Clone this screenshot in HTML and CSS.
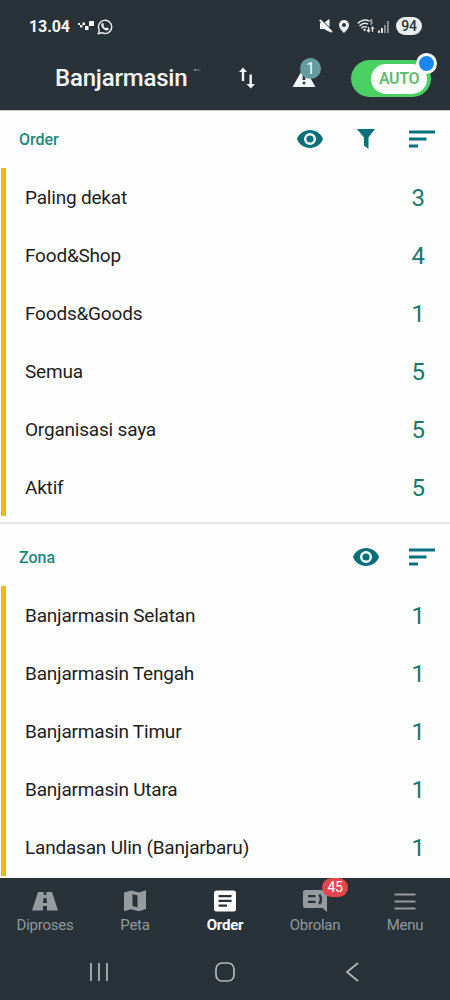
FILE: index.html
```html
<!DOCTYPE html>
<html lang="id">
<head>
<meta charset="utf-8">
<title>Order</title>
<link rel="stylesheet" href="styles.css">
</head>
<body>
<svg class="defs" width="0" height="0">
  <symbol id="eye" viewBox="0 0 26 18"><path fill-rule="evenodd" d="M13 0C7.1 0 2 3.700 0 9c2 5.300 7.100 9 13 9s11-3.700 13-9C24 3.700 18.900 0 13 0zm0 15a6 6 0 1 1 0-12 6 6 0 0 1 0 12zm0-2.400a3.600 3.600 0 1 0 0-7.200 3.600 3.600 0 0 0 0 7.200z"/></symbol>
  <symbol id="sort" viewBox="0 0 26 18"><path d="M0 .5h26v3H0zM0 7.500h17.500v3H0zM0 14.500h9v3H0z"/></symbol>
</svg>
<div class="screen">
  <header class="top">
    <div class="status">
      <span class="clock">13.04</span>
      <svg class="pixels" width="16" height="10" viewBox="0 0 16 10"><path d="M0 2h2v2H0zM2 4h2.500v2.500H2zM4.500 1.500H7V4H4.500zM7 5h3.500v4H7zM11 0h5v5h-5z"/></svg>
      <svg class="wa" width="16" height="16" viewBox="0 0 16 16"><path d="M1.300 14.700l1-3.700A6.600 6.600 0 1 1 5 13.700z" fill="none" stroke="#e8eef0" stroke-width="1.400" stroke-linejoin="round"/><path d="M5 4.300c.5-.5 1-.4 1.300.1l.6 1.300c.1.400-.4.800-.6 1.100.5 1.200 1.300 2 2.600 2.500.4-.3.700-.9 1.100-.8l1.500.8c.5.300.2 1.400-.5 1.800-1.400.8-3.200 0-4.500-1.200S4 7 4.300 5.400c.1-.4.400-.8.700-1.100z"/></svg>
      <span class="grow"></span>
      <svg class="mute" width="14" height="14" viewBox="0 0 14 14"><path d="M1 4h3.500L10.500 0v13L5 10H1z"/><path d="M0 1.300l13 13" stroke="#2a3239" stroke-width="1.200" transform="translate(1.200 -1.500)"/><path d="M.8 1l12 12" stroke="#f4f7f8" stroke-width="2"/></svg>
      <svg class="pin" width="10" height="13" viewBox="0 0 10 13"><path fill-rule="evenodd" d="M5 0a5 5 0 0 0-5 5c0 3 3 6 5 8 2-2 5-5 5-8a5 5 0 0 0-5-5zm0 7a2 2 0 1 1 0-4 2 2 0 0 1 0 4z"/></svg>
      <svg class="wifi" width="18" height="14" viewBox="0 0 18 14"><g fill="none" stroke="#e4eaec" stroke-width="1.500"><path d="M.7 4.500C4 .8 9 .3 12 2M2.500 7c2.500-2.800 6-3.300 8.500-1.800M4.500 9.300c1.500-1.700 4-2 5.500-.8"/></g><path d="M6 10.500l1.500-1.200L9 10.500 7.500 12.500z"/><path d="M15.500 1h-2.200v1.800c2.600-.4 2.800 2.700 0 2.200" fill="none" stroke="#e4eaec" stroke-width="1"/><path d="M11.500 8v4M10 10.800l1.500 2 1.500-2M15.500 13V8.500M14 10l1.500-2L17 10" fill="none" stroke="#e4eaec" stroke-width="1.200"/></svg>
      <svg class="signal" width="12" height="12" viewBox="0 0 12 12"><path d="M0 9.500h1.800V12H0zM3 7h1.800v5H3z"/><path d="M6 4h1.800v8H6zM9 0h1.800v12H9z" opacity=".5"/></svg>
      <span class="battery">94</span>
    </div>
    <div class="bar">
      <h1 class="title">Banjarmasin <span class="cut">T</span></h1>
      <svg class="swap" width="16" height="22" viewBox="0 0 16 22"><path d="M0 5l4-4.500L8 5H5.200v9H2.800V5zM7.500 17h3V7.500h2.400V17H16l-4.200 4.500z"/></svg>
      <div class="alert">
        <svg width="24" height="20" viewBox="0 0 24 20"><path d="M12 0l11.500 20H.5z"/><path d="M10.700 8h2.600v5h-2.600zM10.700 14.700h2.600v2.600h-2.600z" fill="#2a3239"/></svg>
        <span class="count">1</span>
      </div>
      <div class="toggle"><span class="knob">AUTO</span><span class="dot"></span></div>
    </div>
  </header>
  <main class="content">
    <section class="group">
      <div class="head"><h2>Order</h2>
        <svg width="26" height="18"><use href="#eye"/></svg>
        <svg class="funnel" width="18" height="20" viewBox="0 0 18 20"><path d="M0 0h18l-6.500 8.500V20L7 16.500v-8z"/></svg>
        <svg width="26" height="18"><use href="#sort"/></svg>
      </div>
      <ul class="list">
        <li><span>Paling dekat</span><b>3</b></li>
        <li><span>Food&amp;Shop</span><b>4</b></li>
        <li><span>Foods&amp;Goods</span><b>1</b></li>
        <li><span>Semua</span><b>5</b></li>
        <li><span>Organisasi saya</span><b>5</b></li>
        <li><span>Aktif</span><b>5</b></li>
      </ul>
    </section>
    <section class="group">
      <div class="head"><h2>Zona</h2>
        <svg width="26" height="18"><use href="#eye"/></svg>
        <svg width="26" height="18"><use href="#sort"/></svg>
      </div>
      <ul class="list">
        <li><span>Banjarmasin Selatan</span><b>1</b></li>
        <li><span>Banjarmasin Tengah</span><b>1</b></li>
        <li><span>Banjarmasin Timur</span><b>1</b></li>
        <li><span>Banjarmasin Utara</span><b>1</b></li>
        <li><span>Landasan Ulin (Banjarbaru)</span><b>1</b></li>
      </ul>
    </section>
  </main>
  <footer class="bottom">
    <nav class="tabs">
      <div class="tab"><svg width="26" height="22" viewBox="0 0 26 22"><path fill-rule="evenodd" d="M6 2h5.700v3h2.600V2H20l6 18.500H15V16h-4v4.500H0zM11.500 8L11 13h4l-.5-5z"/></svg><span>Diproses</span></div>
      <div class="tab"><svg width="22" height="22" viewBox="0 0 22 22"><path fill-rule="evenodd" d="M0 2.500l7-2 8 2 7-2.200V19l-7 2.200-8-2L0 21.200zM8.500 4V16l5 1.500V5.500z"/></svg><span>Peta</span></div>
      <div class="tab active"><svg width="22" height="22" viewBox="0 0 22 22"><rect y=".5" width="22" height="21" rx="2.500"/><path d="M4.500 5h13v2.200h-13zM4.500 9.800h13V12h-13zM4.500 14.600h8.500v2.200H4.500z" fill="#2a3239"/></svg><span>Order</span></div>
      <div class="tab"><div class="chat"><svg width="24" height="22" viewBox="0 0 24 22"><path d="M2 0h20a2 2 0 0 1 2 2v20l-4.500-4H2a2 2 0 0 1-2-2V2a2 2 0 0 1 2-2z"/><path d="M5 5h7.500v2.300H5zM5 10.800h7.500V13H5z" fill="#2a3239"/><path d="M16.200 4.500q3.600 4.500 0 9.500" fill="none" stroke="#2a3239" stroke-width="2.500"/></svg><span class="unread">45</span></div><span>Obrolan</span></div>
      <div class="tab"><svg width="22" height="22" viewBox="0 0 22 22"><path d="M.5 3.500h21v2H.5zM.5 10.500h21v2H.5zM.5 17.500h21v2H.5z"/></svg><span>Menu</span></div>
    </nav>
    <div class="system">
      <svg width="20" height="20" viewBox="0 0 20 20"><path d="M2 1v18M10 1v18M18 1v18"/></svg>
      <svg width="20" height="20" viewBox="0 0 20 20"><rect x="1" y="1" width="18" height="18" rx="6"/></svg>
      <svg width="20" height="20" viewBox="0 0 20 20"><path d="M17 1L6 10l11 9"/></svg>
    </div>
  </footer>
</div>
</body>
</html>
```

FILE: styles.css
```css
* { box-sizing: border-box; }
body { margin: 0; font-family: Roboto, "Liberation Sans", sans-serif; background: #fff; }
h1, h2, ul { margin: 0; padding: 0; }
svg { display: block; flex: none; }
.defs { position: absolute; }
.screen { width: 450px; height: 1000px; display: flex; flex-direction: column; overflow: hidden; background: #fefefe; }
.top { height: 110px; background: #2a3239; color: #f4f8fa; flex: none; }
.status { height: 52px; padding: 0 28px 0 29px; display: flex; align-items: center; }
.status svg, .bar svg { fill: #f4f7f8; }
.clock { font-size: 16px; font-weight: 700; letter-spacing: -.1px; }
.pixels { margin-left: 8px; }
.wa { margin-left: 3px; margin-top: 1px; }
.grow { flex: 1; }
.pin { margin-left: 6px; }
.wifi { margin-left: 8px; }
.signal { margin: 2px 6px 0 3px; }
.battery { width: 26px; height: 18px; border-radius: 9px; background: #e9eef0; color: #2a3239; font-size: 14px; font-weight: 500; line-height: 19px; letter-spacing: -.3px; text-align: center; }
.bar { height: 52px; padding: 0 19px 0 55px; display: flex; align-items: center; }
.title { width: 155px; white-space: nowrap; font-size: 24px; font-weight: 500; letter-spacing: -.2px; }
.cut { color: transparent; background: linear-gradient(90deg, #8c969e, #2a3239) 0 0 / 8px 8px no-repeat; background-clip: text; -webkit-background-clip: text; font-weight: 400; }
.swap { margin-left: 29px; }
.alert { position: relative; margin-left: 37px; padding-bottom: 3px; }
.count { position: absolute; left: 8px; top: -9px; width: 21px; height: 21px; border-radius: 50%; background: #649aa0; text-align: center; font-size: 16px; line-height: 21px; }
.toggle { position: relative; margin-left: auto; width: 80px; height: 37px; border-radius: 19px; background: #4bd064; padding: 4px 4px 4px 20px; }
.knob { display: block; height: 30px; border-radius: 15px; background: #fff; color: #5fba72; font-size: 16px; font-weight: 600; line-height: 30px; letter-spacing: -.4px; text-align: center; }
.dot { position: absolute; right: -6px; top: -7px; width: 21px; height: 21px; border-radius: 50%; border: 3px solid #fff; background: #1886f5; }
.content { height: 768px; flex: none; overflow: hidden; border-top: 1px solid #c2c9d2; }
.group + .group { margin-top: 6px; border-top: 2px solid #e6e6e6; padding-top: 4px; }
.head { height: 58px; margin-top: -1px; padding: 0 15px 0 19px; display: flex; align-items: center; gap: 30px; fill: #08707a; }
.group + .group .head { margin-top: 0; }
.head h2 { flex: 1; color: #21867e; font-size: 16px; font-weight: 500; }
.funnel { margin: 0 4px; }
.list { list-style: none; margin-left: 1px; border-left: 5px solid #f7b511; }
.list li { height: 58px; padding: 0 25px 0 19px; display: flex; align-items: center; justify-content: space-between; font-size: 19px; letter-spacing: -.2px; color: #1d1d1d; }
.list b { padding-top: 2px; font-size: 24px; font-weight: 400; letter-spacing: 0; color: #16796d; }
.bottom { flex: 1; background: #2a3239; }
.tabs { height: 66px; padding-top: 12px; display: grid; grid-template-columns: repeat(5, 90px); }
.tab { display: flex; flex-direction: column; align-items: center; gap: 4px; color: #8f999f; fill: #949c9f; font-size: 15px; line-height: 18px; letter-spacing: -.25px; }
.active { color: #fff; fill: #fff; font-weight: 700; }
.chat { position: relative; }
.unread { position: absolute; left: 19px; top: -12px; width: 26px; height: 19px; border-radius: 10px; background: #e2474b; color: #fff; font-size: 14px; line-height: 19px; text-align: center; }
.system { height: 56px; padding: 0 89px; display: flex; align-items: center; justify-content: space-between; fill: none; stroke: #b2b9bd; stroke-width: 1.700; }
```
